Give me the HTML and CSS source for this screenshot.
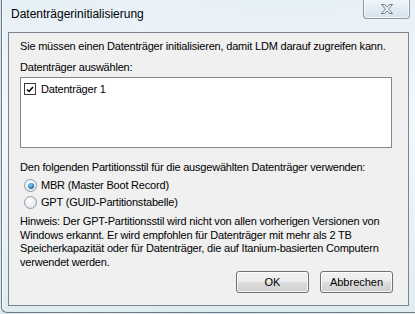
FILE: index.html
```html
<!DOCTYPE html>
<html lang="de">
<head>
    <meta charset="UTF-8">
    <title>Datenträgerinitialisierung</title>
    <link rel="stylesheet" href="styles.css">
</head>
<body>
    <div class="window">
        <div class="titlebar">
            <span class="title">Datenträgerinitialisierung</span>
            <button class="close-btn" type="button" aria-label="Schließen">
                <svg width="16" height="12" viewBox="0 0 16 12">
                    <path d="M2.5 1.5h3l2.5 2.7 2.5-2.7h3l-4 4.5 4 4.5h-3l-2.5-2.7-2.5 2.7h-3l4-4.5z" fill="#f4f6f8" stroke="#6f7a86" stroke-width="1" stroke-linejoin="round"/>
                </svg>
            </button>
        </div>
        <div class="client">
            <p class="intro">Sie müssen einen Datenträger initialisieren, damit LDM darauf zugreifen kann.</p>
            <p class="label">Datenträger auswählen:</p>
            <div class="disk-list">
                <label class="disk-item">
                    <span class="checkbox">
                        <svg width="8" height="7" viewBox="0 0 8 7"><path d="M1 3.5l2 2L7 1" fill="none" stroke="#000" stroke-width="1.5"/></svg>
                    </span>
                    Datenträger 1
                </label>
            </div>
            <p class="label style-label">Den folgenden Partitionsstil für die ausgewählten Datenträger verwenden:</p>
            <div class="radio-group">
                <label class="radio-row"><span class="radio checked"></span>MBR (Master Boot Record)</label>
                <label class="radio-row"><span class="radio"></span>GPT (GUID-Partitionstabelle)</label>
            </div>
            <p class="hint">Hinweis: Der GPT-Partitionsstil wird nicht von allen vorherigen Versionen von Windows erkannt. Er wird empfohlen für Datenträger mit mehr als 2 TB Speicherkapazität oder für Datenträger, die auf Itanium-basierten Computern verwendet werden.</p>
            <div class="buttons">
                <button class="btn" type="button">OK</button>
                <button class="btn" type="button">Abbrechen</button>
            </div>
        </div>
    </div>
</body>
</html>
```

FILE: styles.css
```css
* { box-sizing: border-box; margin: 0; padding: 0; }
html, body { height: 100%; }
body {
    background: linear-gradient(100deg, #cfe2ee 0%, #eef5f9 30%, #d6e6f0 60%, #e9f3f6 100%);
    font-family: 'Liberation Sans', Arial, sans-serif;
    font-size: 11px;
    color: #000;
    overflow: hidden;
}
.window {
    width: 430px;
    height: 313px;
    margin-left: 1px;
    border-left: 1px solid #6c7884;
    border-bottom: 1px solid #6c7884;
    border-bottom-left-radius: 6px;
    background: linear-gradient(180deg, rgba(232, 241, 248, 0.9) 0%, rgba(244, 248, 251, 0.95) 40%, rgba(222, 236, 242, 0.9) 100%);
    box-shadow: inset 1px 0 0 rgba(255, 255, 255, 0.8);
    padding: 0 0 7px 6px;
}
.titlebar {
    height: 32px;
    display: flex;
    align-items: flex-start;
    justify-content: space-between;
    width: 402px;
}
.title {
    font-size: 12px;
    padding: 7px 0 0 3px;
    color: #000;
}
.close-btn {
    width: 47px;
    height: 20px;
    margin-top: -1px;
    border: 1px solid #8b96a3;
    border-top: none;
    border-radius: 0 0 4px 4px;
    background: linear-gradient(180deg, #f3f7fa 0%, #e3ecf3 50%, #d6e2ec 100%);
    box-shadow: inset 0 0 0 1px rgba(255, 255, 255, 0.7);
    display: flex;
    align-items: center;
    justify-content: center;
}
.client {
    width: 401px;
    height: 274px;
    border: 1px solid #7b8590;
    background: #f0f0f0;
    padding: 6px 15px 0 11px;
    display: flex;
    flex-direction: column;
    letter-spacing: -0.2px;
}
.intro { line-height: 14px; white-space: nowrap; }
.label { margin-top: 7px; line-height: 14px; }
.disk-list {
    margin-top: 3px;
    width: 372px;
    height: 71px;
    border: 1px solid #828790;
    background: #fff;
    padding: 4px 2px;
}
.disk-item {
    display: flex;
    align-items: center;
    gap: 5px;
    line-height: 14px;
    padding-left: 1px;
}
.checkbox {
    width: 12px;
    height: 12px;
    border: 1px solid #3a3a3a;
    background: #fff;
    display: flex;
    align-items: center;
    justify-content: center;
}
.style-label { margin-top: 12px; }
.radio-group {
    margin-top: 5px;
    display: flex;
    flex-direction: column;
    gap: 4px;
    padding-left: 4px;
}
.radio-row {
    display: flex;
    align-items: center;
    gap: 4px;
    line-height: 13px;
}
.radio {
    width: 13px;
    height: 13px;
    border-radius: 50%;
    border: 1px solid #8f9aa5;
    background: radial-gradient(circle at 40% 35%, #ffffff 0%, #e4e8ec 70%, #cfd5db 100%);
    position: relative;
}
.radio.checked::after {
    content: "";
    position: absolute;
    left: 2.5px;
    top: 2.5px;
    width: 6px;
    height: 6px;
    border-radius: 50%;
    background: radial-gradient(circle at 40% 35%, #8fd0f5 0%, #2a7ab8 60%, #1a4f85 100%);
}
.hint {
    margin-top: 6px;
    line-height: 13.5px;
    width: 380px;
}
.buttons {
    margin-top: 2px;
    display: flex;
    justify-content: flex-end;
    gap: 11px;
}
.btn {
    width: 73px;
    height: 22px;
    font-family: 'Liberation Sans', Arial, sans-serif;
    font-size: 11px;
    color: #000;
    border: 1px solid #707070;
    border-radius: 3px;
    background: linear-gradient(180deg, #f2f2f2 0%, #ebebeb 49%, #dddddd 50%, #cfcfcf 100%);
    box-shadow: inset 0 0 0 1px rgba(255, 255, 255, 0.8);
}
```
